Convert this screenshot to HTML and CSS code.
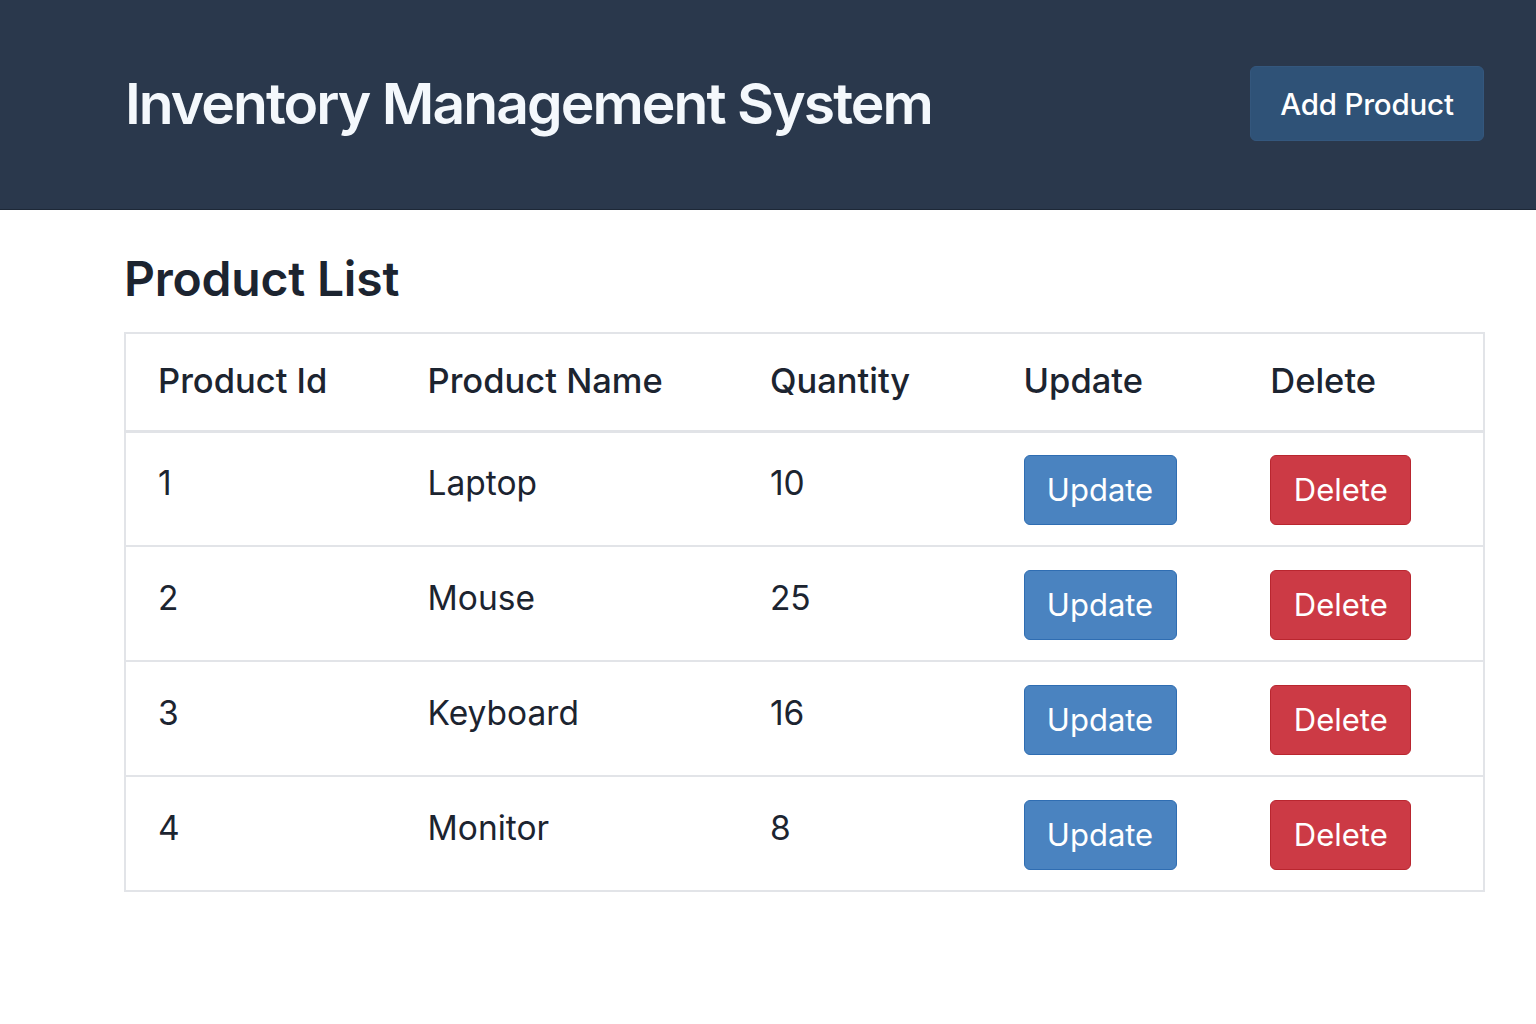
FILE: index.html
```html
<!DOCTYPE html>
<html>
<head>
<meta charset="utf-8">
<link rel="stylesheet" href="styles.css">
</head>
<body>
<header class="topbar">
  <h1 class="title">Inventory Management System</h1>
  <button class="btn btn-add">Add Product</button>
</header>
<main class="content">
  <h2 class="subtitle">Product List</h2>
  <table class="table">
    <colgroup>
      <col class="c1"><col class="c2"><col class="c3"><col class="c4"><col class="c5">
    </colgroup>
    <thead>
      <tr><th>Product Id</th><th>Product Name</th><th>Quantity</th><th>Update</th><th>Delete</th></tr>
    </thead>
    <tbody>
      <tr><td>1</td><td>Laptop</td><td>10</td><td><button class="btn btn-update">Update</button></td><td><button class="btn btn-delete">Delete</button></td></tr>
      <tr><td>2</td><td>Mouse</td><td>25</td><td><button class="btn btn-update">Update</button></td><td><button class="btn btn-delete">Delete</button></td></tr>
      <tr><td>3</td><td>Keyboard</td><td>16</td><td><button class="btn btn-update">Update</button></td><td><button class="btn btn-delete">Delete</button></td></tr>
      <tr><td>4</td><td>Monitor</td><td>8</td><td><button class="btn btn-update">Update</button></td><td><button class="btn btn-delete">Delete</button></td></tr>
    </tbody>
  </table>
</main>
</body>
</html>
```
FILE: styles.css
```css
* { box-sizing: border-box; }
body {
  margin: 0;
  font-family: Inter, "Noto Sans", "Liberation Sans", sans-serif;
  color: #1c2430;
  background: #ffffff;
}
.topbar {
  height: 210px;
  background: #2a384c;
  border-bottom: 1px solid #1d2837;
  display: flex;
  align-items: center;
  justify-content: space-between;
  padding: 0 52px 0 125px;
}
.title {
  margin: 0;
  color: #f4f8fc;
  font-size: 57px;
  font-weight: 600;
  letter-spacing: -1.95px;
  position: relative;
  top: -1px;
}
.btn {
  font-family: Inter, "Noto Sans", "Liberation Sans", sans-serif;
  border-radius: 6px;
  cursor: pointer;
  color: #ffffff;
}
.btn-add {
  width: 234px;
  height: 75px;
  background: #2f5277;
  border: 1px solid #34577d;
  font-size: 29.5px;
  font-weight: 500;
  letter-spacing: -0.2px;
  position: relative;
  top: -1px;
}
.content {
  padding: 40px 52px 0 124px;
}
.subtitle {
  margin: 0 0 24px 0;
  font-size: 48px;
  font-weight: 600;
  color: #1c2430;
  letter-spacing: -0.2px;
  line-height: 58px;
}
.table {
  width: 1361px;
  border-collapse: collapse;
  border: 2px solid #e2e4e8;
}
.c1 { width: 271px; }
.c2 { width: 343px; }
.c3 { width: 254px; }
.c4 { width: 247px; }
.c5 { width: 246px; }
th, td {
  text-align: left;
  padding: 0 0 0 32px;
}
th {
  height: 98px;
  font-size: 34.5px;
  font-weight: 500;
  color: #1c2430;
  border-bottom: 3px solid #e1e3e7;
  padding-bottom: 2px;
}
td {
  height: 115px;
  font-size: 33.5px;
  font-weight: 400;
  color: #1c2430;
  border-bottom: 2px solid #e2e4e8;
  padding-bottom: 12px;
}
td:nth-child(4), td:nth-child(5) {
  padding-bottom: 0;
  padding-top: 2px;
}
.btn-update {
  width: 153px;
  height: 70px;
  background: #4a83c0;
  border: 1px solid #2f6db2;
  font-size: 31px;
  font-weight: 400;
}
.btn-delete {
  width: 141px;
  height: 70px;
  background: #cc3a45;
  border: 1px solid #b9262f;
  font-size: 31px;
  font-weight: 400;
}
```
